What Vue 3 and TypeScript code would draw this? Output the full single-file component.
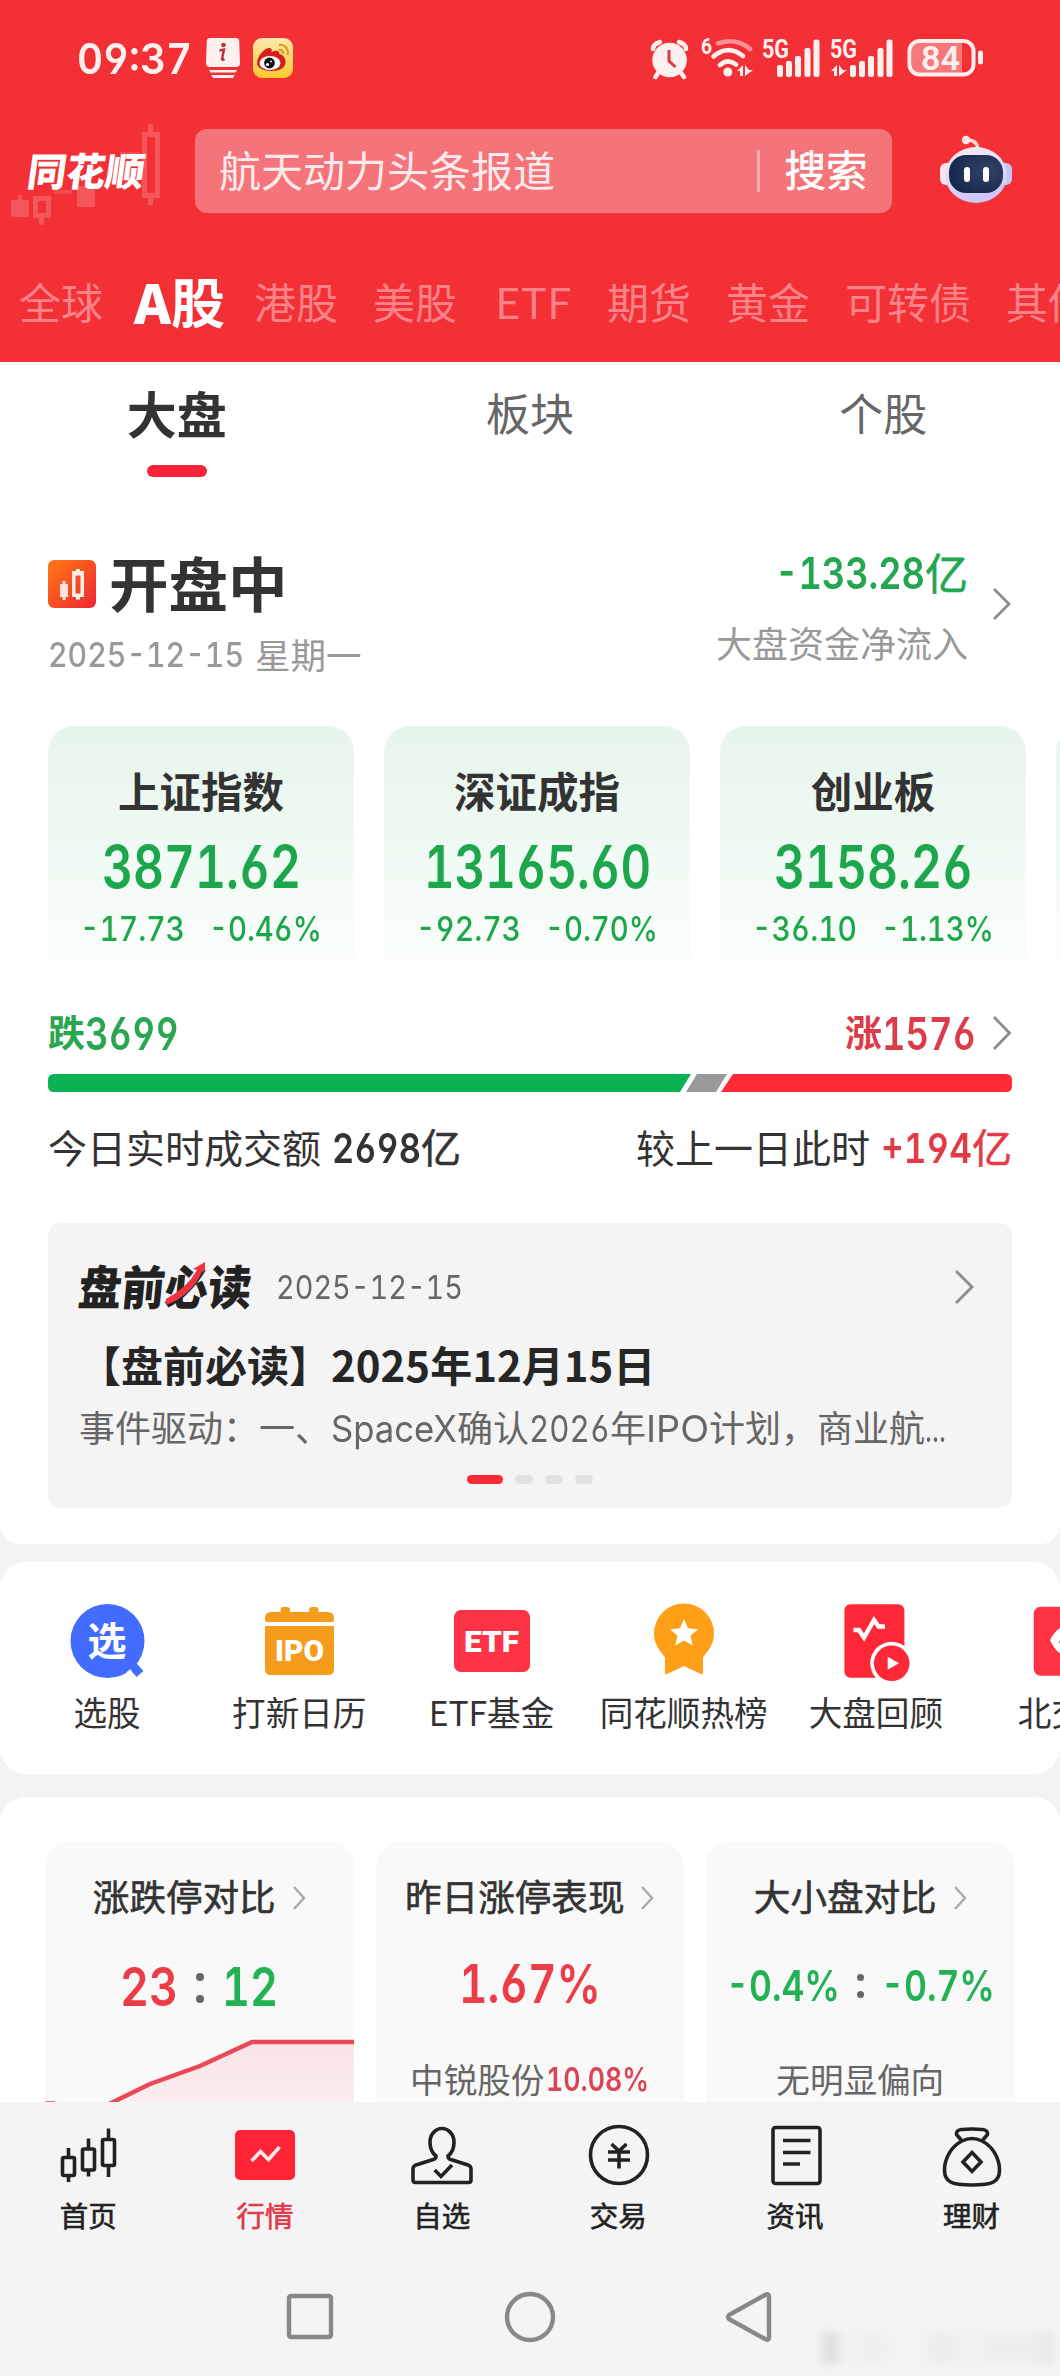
<script setup lang="ts">
interface IndexCard { name: string; value: string; width: number; diff: string; pct: string }
interface Fit { value: number }

// Condenses a run of Latin text to the given width in pixels.
const vFit = {
  mounted(el: HTMLElement, binding: Fit) {
    const natural = el.getBoundingClientRect().width
    if (!natural) return
    el.style.transformOrigin = 'left center'
    el.style.transform = `scaleX(${binding.value / natural})`
    el.style.marginRight = `${binding.value - natural}px`
  },
}

const subTabs: string[] = ['大盘', '板块', '个股']

const indices: IndexCard[] = [
  { name: '上证指数', value: '3871.62', width: 199, diff: '-17.73', pct: '-0.46%' },
  { name: '深证成指', value: '13165.60', width: 227, diff: '-92.73', pct: '-0.70%' },
  { name: '创业板', value: '3158.26', width: 199, diff: '-36.10', pct: '-1.13%' },
]

const shortcuts: string[] = ['选股', '打新日历', 'ETF基金', '同花顺热榜', '大盘回顾', '北交所']
const navItems: string[] = ['首页', '行情', '自选', '交易', '资讯', '理财']
</script>

<template>
  <div class="app">
    <header class="top">
      <div class="status">
        <span v-fit="115" class="n clock">09:37</span>
        <svg class="st-info" width="34" height="40" viewBox="0 0 34 40">
          <path d="M4 0h26q3 0 3.200 3l.8 22q0 4-4 4H4q-4 0-4-4L.8 3Q1 0 4 0z" fill="#fff0f0" />
          <path d="M3 32h28l-1.500 2.600H4.500zM5.500 37h23l-1.500 3h-20z" fill="#fff0f0" />
          <circle cx="17.500" cy="7" r="2.300" fill="#b8323c" />
          <path d="M13.500 12.500l4.500-1-2 9.500q0 1.500 2.500 0" fill="none" stroke="#b8323c" stroke-width="2.400" />
        </svg>
        <svg class="st-weibo" width="40" height="40" viewBox="0 0 40 40">
          <defs>
            <linearGradient id="wb" x1="0" y1="0" x2="0" y2="1">
              <stop offset="0" stop-color="#fde9b0" /><stop offset="1" stop-color="#fbc92c" />
            </linearGradient>
          </defs>
          <rect width="40" height="40" rx="9" fill="url(#wb)" />
          <path d="M4 25c0-6 7-15 12-15 3 0 3 2 2.500 4 4-2 8-2 8 2 4 1 6 4 6 8 0 6-6 9-14 9S4 30 4 25z" fill="#d51f1c" />
          <ellipse cx="17" cy="25" rx="10.500" ry="7" fill="#fff" />
          <circle cx="16.500" cy="25" r="5.400" fill="#111" />
          <circle cx="14.500" cy="26.500" r="1.600" fill="#fff" /><circle cx="18" cy="23.500" r=".9" fill="#fff" />
          <path d="M26 7c6-1 10 4 8.500 10M26 12c3-.5 5 1.500 4 4" fill="none" stroke="#d6a62a" stroke-width="2.400" />
        </svg>
        <svg class="st-right" width="340" height="44" viewBox="0 0 340 44">
          <g fill="none" stroke="#fff0f0" stroke-linecap="round">
            <path d="M5 13q0-5 7-7M31 6q7 2 7 7" stroke-width="4.500" />
            <path d="M10 37l-2.500 4M33 37l3 4" stroke-width="4.500" />
          </g>
          <circle cx="21.600" cy="24" r="17.300" fill="#fff0f0" />
          <path d="M21 14v11l6.500 6" fill="none" stroke="#d93a44" stroke-width="3" />
          <text x="53" y="18" font-size="22" class="st-t" textLength="11" lengthAdjust="spacingAndGlyphs">6</text>
          <g fill="none" stroke="#fff0f0" stroke-width="4.600" stroke-linecap="round">
            <path d="M70 7.500Q88 1 102 13" stroke="#fb8f93" />
            <path d="M65.500 20.500Q80 8 95 20" />
            <path d="M72 29Q80 22 88 28.500" />
          </g>
          <circle cx="79.800" cy="36" r="4.500" fill="#fff0f0" />
          <path d="M89 35l6-6v11h-3v-5zM97 29v11l8-6h-4z" fill="#fff0f0" />
          <text x="114" y="21.500" font-size="25.500" class="st-t" textLength="27" lengthAdjust="spacingAndGlyphs">5G</text>
          <text x="182" y="21.500" font-size="25.500" class="st-t" textLength="27" lengthAdjust="spacingAndGlyphs">5G</text>
          <path d="M183 35l6-6v11h-3v-5zM191 29v11l8-6h-4z" fill="#fff0f0" />
          <g fill="#fff0f0">
            <rect x="129" y="29" width="6" height="12" rx="2" /><rect x="138" y="25" width="6" height="16" rx="2" />
            <rect x="147" y="20" width="6" height="21" rx="2" /><rect x="156.500" y="12" width="6" height="29" rx="2" />
            <rect x="165.500" y="3.500" width="6" height="37.500" rx="2" />
            <rect x="202" y="29" width="6" height="12" rx="2" /><rect x="211" y="25" width="6" height="16" rx="2" />
            <rect x="220" y="20" width="6" height="21" rx="2" /><rect x="229.500" y="12" width="6" height="29" rx="2" />
            <rect x="238.500" y="3.500" width="6" height="37.500" rx="2" />
            <rect x="330" y="14.500" width="5" height="14" rx="2.500" />
          </g>
          <path d="M270 6h44v31h-44q-6 0-6-6V12q0-6 6-6z" fill="#f8777b" />
          <rect x="261.500" y="5" width="64" height="33.500" rx="10" fill="none" stroke="#fff0f0" stroke-width="4" />
          <text x="273" y="34" font-size="34" class="st-t st-batt" textLength="39" lengthAdjust="spacingAndGlyphs">84</text>
        </svg>
      </div>

      <div class="search-row">
        <div class="brand">
          <svg class="brand-bg" width="170" height="110" viewBox="0 0 170 110">
            <g fill="#f5565b">
              <path d="M11 84h7v-5h4v5h7v17H11zM77 70h18v21H77z" />
              <path fill-rule="evenodd" d="M33 80h18v22h-7v7h-5v-7h-6zM38 85v12h8V85z" />
              <path d="M54 74h18v4H54zM120 36h20v5h-20z" opacity=".7" />
              <path fill-rule="evenodd" d="M142 16h6V8h5v8h7v66h-7v7h-5v-7h-6zM147 21v56h8V21z" />
            </g>
          </svg>
          <span class="brand-name">同花顺</span>
        </div>
        <div class="search">
          <span class="c query">航天动力头条报道</span>
          <i class="sep"></i>
          <span class="c go semi">搜索</span>
        </div>
        <svg class="robot" width="80" height="76" viewBox="0 0 80 76">
          <defs>
            <linearGradient id="rb" x1="0" y1="0" x2=".3" y2="1">
              <stop offset="0" stop-color="#ffe9ee" /><stop offset=".5" stop-color="#dfe0fb" /><stop offset="1" stop-color="#cdc6f6" />
            </linearGradient>
            <radialGradient id="rf" cx=".7" cy=".4" r=".8"><stop offset="0" stop-color="#344166" /><stop offset="1" stop-color="#13254a" /></radialGradient>
          </defs>
          <path d="M30 7q11-1 12 9" fill="none" stroke="#ffd5dc" stroke-width="3.500" />
          <circle cx="30" cy="7" r="4.200" fill="#ffe3e6" />
          <rect x="4" y="30" width="14" height="22" rx="6" fill="#fbe3ee" /><rect x="62" y="30" width="14" height="22" rx="6" fill="#c5c4f5" />
          <ellipse cx="40" cy="42" rx="31" ry="28" fill="url(#rb)" />
          <rect x="13" y="22" width="54" height="38" rx="17" fill="url(#rf)" />
          <rect x="28" y="34" width="6" height="15" rx="3" fill="#fff" /><rect x="47" y="34" width="6" height="15" rx="3" fill="#fff" />
        </svg>
      </div>

      <nav class="markets">
        <span class="c m">全球</span>
        <span class="c m on"><b v-fit="37">A</b>股</span>
        <span class="c m">港股</span>
        <span class="c m">美股</span>
        <span class="c m etf"><span v-fit="76">ETF</span></span>
        <span class="c m">期货</span>
        <span class="c m">黄金</span>
        <span class="c m">可转债</span>
        <span class="c m">其他</span>
      </nav>
    </header>

    <main class="overview">
      <div class="subtabs">
        <div v-for="(t, i) in subTabs" :key="t" class="subtab" :class="{ on: i === 0 }">
          <span class="c">{{ t }}</span>
          <i></i>
        </div>
      </div>

      <div class="session">
        <div class="state">
          <div class="state-row">
            <svg width="48" height="48" viewBox="0 0 48 48">
              <defs><linearGradient id="or" x1="0" y1="0" x2="1" y2="1"><stop offset="0" stop-color="#ff7a12" /><stop offset="1" stop-color="#ee2636" /></linearGradient></defs>
              <rect width="48" height="48" rx="6" fill="url(#or)" />
              <path d="M12 24h2.500v-3h3v3H20v13h-2.500v3h-3v-3H12z" fill="#ffe2d8" />
              <path fill-rule="evenodd" d="M24 11h4V9h4v2h4v26h-4v2.500h-4V37h-4zM27.500 15.500v18h5v-18z" fill="#fff1e6" />
            </svg>
            <span class="c state-name">开盘中</span>
          </div>
          <div class="date-row"><span v-fit="196" class="n">2025-12-15</span><span class="c">星期一</span></div>
        </div>
        <div class="flow">
          <div class="flow-val"><span v-fit="150" class="n">-133.28</span><span class="c semi">亿</span></div>
          <div class="flow-lab"><span class="c">大盘资金净流入</span></div>
        </div>
        <svg class="chev big" width="20" height="34" viewBox="0 0 20 34"><path d="M2 2l15 15L2 32" /></svg>
      </div>

      <div class="indices">
        <div v-for="c in indices" :key="c.name" class="index">
          <div class="ix-name"><span class="c">{{ c.name }}</span></div>
          <div class="ix-val"><span v-fit="c.width" class="n">{{ c.value }}</span></div>
          <div class="ix-sub"><span v-fit="105" class="n">{{ c.diff }}</span><span v-fit="113" class="n">{{ c.pct }}</span></div>
        </div>
        <div class="index"></div>
      </div>

      <div class="breadth">
        <div class="down"><span class="c">跌</span><span v-fit="94" class="n">3699</span></div>
        <div class="up"><span class="c">涨</span><span v-fit="94" class="n">1576</span>
          <svg class="chev" width="20" height="36" viewBox="0 0 20 36"><path d="M2 2l15.500 16L2 34" /></svg>
        </div>
      </div>
      <svg class="ratio" width="964" height="18" viewBox="0 0 964 18">
        <path d="M6 0h637l-11 18H6q-6 0-6-6V6q0-6 6-6z" fill="#0bb253" />
        <path d="M649 0h30l-11 18h-30z" fill="#999" />
        <path d="M685 0h273q6 0 6 6v6q0 6-6 6H673z" fill="#ff2a35" />
      </svg>

      <div class="turnover">
        <div class="pair"><span class="c">今日实时成交额</span><b v-fit="89" class="n">2698</b><b class="c semi">亿</b></div>
        <div class="pair right"><span class="c">较上一日此时</span><b v-fit="91" class="n">+194</b><b class="c semi">亿</b></div>
      </div>

      <section class="news">
        <div class="news-head">
          <div class="news-logo">
            <span>盘前必读</span>
            <svg width="42" height="46" viewBox="0 0 42 46"><path d="M0 44v-6Q21 27 31 9l-4-1L39 1v9l-3 1Q25 35 0 44z" fill="#ee3340" /></svg>
          </div>
          <span v-fit="187" class="n news-date">2025-12-15</span>
          <svg class="chev" width="20" height="36" viewBox="0 0 20 36"><path d="M2 2l16 16L2 34" /></svg>
        </div>
        <div class="news-title"><span class="c">【盘前必读】<span>2025年12月15日</span></span></div>
        <div class="news-body"><span class="c">事件驱动：一、</span><span v-fit="126" class="n body-n">SpaceX</span><span class="c">确认</span><span v-fit="81" class="n body-n">2026</span><span class="c">年</span><span v-fit="63" class="n body-n">IPO</span><span class="c">计划，商业航</span><span v-fit="21" class="n body-n">...</span></div>
        <div class="dots"><i class="on"></i><i></i><i></i><i></i></div>
      </section>
    </main>

    <section class="shortcuts">
      <div v-for="(s, i) in shortcuts" :key="s" class="sc">
        <svg width="80" height="80" viewBox="0 0 80 80">
          <g v-if="i === 0">
            <path d="M65 63l8 9" stroke="#416cff" stroke-width="9" />
            <circle cx="40.500" cy="39" r="37" fill="#416cff" />
            <path d="M64 68l-4 3" stroke="#fff" stroke-width="2" />
            <text x="40" y="53" font-size="39" text-anchor="middle" class="ico-cn">选</text>
          </g>
          <g v-else-if="i === 1" fill="#f59c1c">
            <rect x="21.500" y="5" width="9.500" height="10" rx="3" /><rect x="50" y="5" width="9.500" height="10" rx="3" />
            <path d="M12 10h57q6 0 6 6v2q0 2-2 2H8q-2 0-2-2v-2q0-6 6-6zM7 24h67q1 0 1 1v42q0 6-6 6H12q-6 0-6-6V25q0-1 1-1z" />
            <text x="16" y="59" font-size="29.500" class="ico-t" textLength="49" lengthAdjust="spacingAndGlyphs">IPO</text>
          </g>
          <g v-else-if="i === 2">
            <rect x="3" y="8" width="76" height="62" rx="7" fill="#ff3345" />
            <text x="13" y="49.500" font-size="29.500" class="ico-t" textLength="55" lengthAdjust="spacingAndGlyphs">ETF</text>
          </g>
          <g v-else-if="i === 3">
            <path d="M21 50h38v21q0 2-2 1L40 64l-17 8q-2 1-2-1z" fill="#ff9f18" />
            <path d="M40 1.500a30 30 0 0 1 30 30c0 12-7 18-11 24H21c-4-6-11-12-11-24a30 30 0 0 1 30-30z" fill="#ff9f18" />
            <path d="M40 17l4 9.200 10 1-7.500 6.600 2.200 9.800L40 38.500l-8.700 5.100 2.200-9.800L26 27.200l10-1z" fill="#fff" />
          </g>
          <g v-else-if="i === 4">
            <rect x="8.400" y="2.300" width="60" height="73.500" rx="6" fill="#ff2738" />
            <path d="M17.500 28h5.500l5 7.500L38 18l4.500 6.500H49" fill="none" stroke="#fff" stroke-width="4.400" />
            <circle cx="55.700" cy="61.300" r="21.500" fill="#fff" /><circle cx="55.700" cy="61.300" r="17.800" fill="#ff2738" />
            <path d="M51.700 54.800v13l11.300-6.500z" fill="#fff" />
          </g>
          <g v-else>
            <rect x="5.700" y="4.700" width="72" height="69" rx="7" fill="#ff3345" />
            <path d="M22 38q8-15 20-15v10q-8 0-11 7 3 6 11 7v10q-14-5-20-19z" fill="#fff" />
          </g>
        </svg>
        <span class="c">{{ s }}</span>
      </div>
    </section>

    <section class="stats">
      <div class="stat">
        <div class="s-title"><span class="c semi">涨跌停对比</span><svg class="chev sm" width="14" height="26" viewBox="0 0 14 26"><path d="M2 2l10 11L2 24" /></svg></div>
        <div class="s-val v1"><b v-fit="58" class="n red">23</b><i class="colon"></i><b v-fit="56" class="n green">12</b></div>
        <svg class="trend" width="309" height="64" viewBox="0 0 309 64">
          <defs><linearGradient id="tr" x1="0" y1="0" x2="0" y2="1"><stop offset="0" stop-color="#f9e3e6" /><stop offset="1" stop-color="#fbedef" /></linearGradient></defs>
          <path d="M67 64L105 46l50-18L207 4h102v60z" fill="url(#tr)" />
          <path d="M0 65.500h10M64 66l41-20 50-18L207 4h102" fill="none" stroke="#e94856" stroke-width="4.500" />
        </svg>
      </div>
      <div class="stat">
        <div class="s-title"><span class="c semi">昨日涨停表现</span><svg class="chev sm" width="14" height="26" viewBox="0 0 14 26"><path d="M2 2l10 11L2 24" /></svg></div>
        <div class="s-val v2"><b v-fit="142" class="n red">1.67%</b></div>
        <div class="s-sub"><span class="c">中锐股份</span><b v-fit="103" class="n">10.08%</b></div>
      </div>
      <div class="stat">
        <div class="s-title"><span class="c semi">大小盘对比</span><svg class="chev sm" width="14" height="26" viewBox="0 0 14 26"><path d="M2 2l10 11L2 24" /></svg></div>
        <div class="s-val v3"><b v-fit="114" class="n green">-0.4%</b><i class="colon"></i><b v-fit="114" class="n green">-0.7%</b></div>
        <div class="s-sub"><span class="c">无明显偏向</span></div>
      </div>
    </section>

    <footer class="bottom">
      <div class="nav">
        <div v-for="(t, i) in navItems" :key="t" class="nav-item" :class="{ on: i === 1 }">
          <svg width="64" height="64" viewBox="0 0 64 64" fill="none" stroke="#222" stroke-width="3.600">
            <g v-if="i === 0">
              <rect x="6.500" y="33.500" width="12" height="18" rx="1.500" /><path d="M12.500 24v9.500M12.500 51.500V58" />
              <rect x="26.500" y="25" width="12" height="21" rx="1.500" /><path d="M32.500 14.500V25M32.500 46v6.500" />
              <rect x="46.500" y="15.500" width="12" height="26" rx="1.500" /><path d="M52.500 4.500v11M52.500 41.500V53" />
            </g>
            <g v-else-if="i === 1">
              <rect x="2" y="6" width="60" height="50" rx="5" fill="#ff2436" stroke="none" />
              <path d="M18.500 37l9-9.500 8 8L46.500 23" stroke="#ffe9ec" />
            </g>
            <g v-else-if="i === 2">
              <path d="M26 32c-4-3-6-8-6-14a12 13.500 0 0 1 24 0c0 6-2 11-6 14q0 2.500 2 3.200L58 41q3 1 3 4v11q0 2.500-2.500 2.500h-53Q3 58.500 3 56V45q0-3 3-4l18-5.800q2-.7 2-3.200z" />
              <path d="M24.700 46l6.300 6.500L42 41" />
            </g>
            <g v-else-if="i === 3">
              <circle cx="33" cy="31" r="28.500" /><path d="M25.500 20l7.500 7 7.500-7M33 27v17.500M22 28h22M22 36h22" />
            </g>
            <g v-else-if="i === 4">
              <rect x="10" y="3.500" width="47" height="56" rx="2.500" /><path d="M20 16.500h27.500M20 28.500h27.500M20 40h17" />
            </g>
            <g v-else>
              <path d="M22 17l-5.500-6.500q-.5-4.500 5-5Q32 4.500 42.500 5.500q5.500.500 5 5L42 17" />
              <path d="M22 17C10 23 4.500 36 4.500 46c0 12 7 15 27.500 15s27.500-3 27.500-15C59.500 36 54 23 42 17q-5-2.500-10-2.500T22 17z" />
              <path d="M32 28.500l9 9.500-9 9.500-9-9.500z" />
            </g>
          </svg>
          <span class="c semi">{{ t }}</span>
        </div>
      </div>
      <div class="sys">
        <svg width="60" height="60" viewBox="0 0 60 60"><rect x="9" y="9" width="42" height="41" rx="2" /></svg>
        <svg width="60" height="60" viewBox="0 0 60 60"><circle cx="30" cy="30" r="23" /></svg>
        <svg width="60" height="60" viewBox="0 0 60 60"><path d="M9 28L46 7.500q3-1 3 2v41q0 3-3 2L9 32q-2-2 0-4z" /></svg>
      </div>
      <div class="smudge"></div>
    </footer>
  </div>
</template>

<style>
html, body { margin: 0; background: #f3f3f3; }
</style>

<style scoped>
.app {
  width: 1060px; height: 2376px; overflow: hidden; position: relative; background: #f3f3f4;
  display: flex; flex-direction: column; color: #333; white-space: nowrap;
  font-family: "Noto Sans CJK SC", "Noto Sans", sans-serif;
}
.app * { box-sizing: border-box; flex-shrink: 0; }
.app svg { display: block; }
.c { display: block; line-height: 1; margin-bottom: .09em; }
.semi { font-weight: 400; -webkit-text-stroke: .6px currentColor; }
.n { display: block; line-height: 1; font-family: Inter, Roboto, sans-serif; font-feature-settings: "cv03", "cv04", "tnum"; font-weight: 600; }
.chev { fill: none; stroke: #8c8c8c; stroke-width: 2.8px; }

.top { height: 362px; background: #f23036; color: #fff; }
.status { height: 116px; display: flex; align-items: center; padding-left: 77px; }
.clock { font-size: 43px; color: #fff0f0; }
.st-info { margin-left: 14px; }
.st-weibo { margin-left: 13px; }
.st-right { margin-left: 355px; }
.st-t { font-family: Roboto, sans-serif; font-weight: 700; fill: #fff0f0; }
.st-batt { font-weight: 600; }
.search-row { height: 110px; display: flex; align-items: center; }
.brand { width: 195px; height: 110px; position: relative; display: flex; align-items: center; padding-left: 28px; }
.brand-bg { position: absolute; left: 0; top: 0; }
.brand-name { position: relative; font-size: 39px; line-height: 1; font-weight: 900; transform: skewX(-8deg); margin-bottom: 4px; }
.search { width: 697px; height: 84px; border-radius: 12px; background: #f57479; display: flex; align-items: center; padding-left: 24px; }
.query { width: 538px; font-size: 42px; color: #ffeaeb; }
.sep { width: 2.500px; height: 42px; background: #fab0b3; margin-right: 25px; }
.go { font-size: 41.500px; }
.robot { margin-left: 44px; }
.markets { height: 136px; display: flex; align-items: center; padding: 18px 0 0 19px; gap: 35px; }
.m { font-size: 42px; color: #fb8387; }
.m.on { font-size: 54px; font-weight: 700; color: #fff; display: flex; width: 92px; margin-left: -4px; margin-right: -7px; }
.etf { width: 80px; display: flex; justify-content: center; padding-left: 2px; }

.overview { height: 1182px; background: #fff; border-radius: 0 0 20px 20px; overflow: hidden; }
.subtabs { display: flex; height: 115px; }
.subtab { width: 353.333px; display: flex; flex-direction: column; align-items: center; font-size: 44px; color: #666; }
.subtab span { height: 103px; line-height: 103px; margin: 0; position: relative; top: -1px; }
.subtab.on { font-size: 50px; font-weight: 700; color: #333; }
.subtab.on i { width: 60px; height: 12px; border-radius: 6px; background: #fb2339; }
.session { display: flex; padding: 77px 48px 0; height: 249px; }
.state { flex: 1; }
.state-row { height: 60px; display: flex; align-items: center; gap: 13px; }
.state-name { font-size: 59.500px; font-weight: 700; }
.date-row { margin-top: 23px; height: 36px; display: flex; align-items: center; font-size: 35.500px; color: #999; gap: 11px; }
.date-row .n { font-size: 34px; font-weight: 500; }
.flow { margin-top: -3px; display: flex; flex-direction: column; align-items: flex-end; }
.flow-val { height: 44px; display: flex; align-items: center; color: #22a650; font-size: 43px; }
.flow-val .n { font-size: 44px; }
.flow-lab { margin-top: 31px; height: 36px; display: flex; align-items: center; font-size: 36px; color: #999; }
.big { margin: 33px 0 0 24px; }
.indices { display: flex; gap: 30px; padding-left: 48px; }
.index { width: 306px; height: 268px; border-radius: 26px; padding-top: 46px; background: linear-gradient(#e6f5ec, #f1faf4 50%, #fefffe); color: #1da74c; }
.index > div { display: flex; justify-content: center; align-items: center; }
.ix-name { height: 42px; font-size: 41.500px; font-weight: 700; color: #333; }
.ix-val { height: 60px; margin-top: 22px; font-size: 59px; }
.ix-sub { height: 40px; margin-top: 13px; font-size: 34.500px; gap: 24px; }
.ix-sub .n { font-weight: 550; }
.breadth { display: flex; justify-content: space-between; height: 40px; margin: 19px 48px 0; font-size: 37px; font-weight: 700; }
.breadth > div { display: flex; align-items: center; }
.breadth .n { font-size: 45px; }
.down { color: #2aa651; }
.up { color: #dc3c4a; }
.up .chev { margin-left: 16px; }
.ratio { margin: 21px 0 0 48px; }
.turnover { height: 40px; margin: 36px 48px 0; display: flex; justify-content: space-between; }
.pair { display: flex; align-items: center; font-size: 40px; }
.pair span { margin-right: 11px; font-size: 39px; }
.pair .n { font-size: 41px; font-weight: 600; }
.right b { color: #e13b48; }
.news { margin: 55px 48px 0; height: 285px; border-radius: 12px; background: #f4f4f4; padding: 42px 31px 0; }
.news-head { height: 44px; display: flex; align-items: center; }
.news-logo { position: relative; width: 198px; }
.news-logo span { display: block; font-size: 47px; line-height: 1; font-weight: 900; color: #222; margin-bottom: 5px; transform: scaleX(.92) skewX(-6deg); transform-origin: left center; }
.news-logo svg { position: absolute; left: 87px; top: 0; }
.news-date { font-size: 33px; font-weight: 400; color: #666; margin-left: -1px; }
.news-head .chev { margin-left: auto; margin-right: 7px; }
.news-title { margin-top: 36px; height: 42px; display: flex; align-items: center; font-size: 42px; font-weight: 700; color: #262626; }
.news-body { margin-top: 23px; height: 36px; display: flex; align-items: center; font-size: 36px; color: #666; }
.body-n { font-weight: 400; font-size: 37px; }
.dots { margin-top: 29px; display: flex; gap: 12px; justify-content: center; }
.dots i { width: 18px; height: 9px; border-radius: 5px; background: #e2e2e2; }
.dots .on { width: 36px; background: #f92a38; }

.shortcuts { margin-top: 18px; height: 212px; background: #fff; border-radius: 26px; display: flex; padding: 40px 0 0 11px; overflow: hidden; }
.sc { width: 192.200px; display: flex; flex-direction: column; align-items: center; font-size: 33.600px; color: #333; }
.sc .c { margin-top: 13px; }
.ico-cn { font-weight: 700; fill: #fff; }
.ico-t { font-family: Roboto, sans-serif; font-weight: 900; fill: #fff; }

.stats { margin-top: 23px; height: 305px; background: #fff; border-radius: 26px 26px 0 0; padding: 45px 0 0 45px; display: flex; gap: 22px; overflow: hidden; }
.stat { width: 308.500px; height: 280px; background: #f9f9f9; border-radius: 24px; padding-top: 38px; overflow: hidden; }
.s-title { height: 36px; display: flex; justify-content: center; align-items: center; font-size: 36.600px; gap: 16px; }
.sm { stroke: #aaa; stroke-width: 2.400px; }
.s-val { height: 48px; margin-top: 46px; display: flex; justify-content: center; align-items: center; }
.v1 { font-size: 53px; padding-top: 3px; }
.v2 { font-size: 54px; padding-bottom: 4px; }
.v3 { font-size: 43px; padding-bottom: 1px; }
.red { color: #eb3c48; }
.green { color: #22b153; }
.colon { width: 8px; height: 30px; margin: 0 18px; display: flex; flex-direction: column; justify-content: space-between; }
.v3 .colon { width: 7px; height: 24px; margin: 0 17px; }
.colon::before, .colon::after { content: ""; width: 100%; aspect-ratio: 1; border-radius: 50%; background: #666; }
.trend { margin-top: 28px; }
.s-sub { height: 34px; margin-top: 53px; display: flex; justify-content: center; align-items: center; font-size: 33.600px; color: #666; gap: 2px; }
.s-sub .n { color: #d94552; font-size: 32px; font-weight: 600; }

.bottom { height: 274px; background: #f4f4f4; position: relative; }
.nav { display: flex; padding-top: 22px; }
.nav-item { width: 176.666px; display: flex; flex-direction: column; align-items: center; font-size: 28.500px; color: #222; }
.nav-item .c { margin-top: 13px; }
.nav-item.on { color: #e03a48; }
.sys { margin-top: 55px; padding: 0 280px; display: flex; justify-content: space-between; }
.sys svg { fill: none; stroke: #888; stroke-width: 4.400px; stroke-linejoin: round; }
.smudge { position: absolute; left: 822px; top: 230px; width: 230px; height: 32px; filter: blur(4px);
  background: linear-gradient(90deg, #dfdfdf 0 12px, #f2f2f2 22px 34px, #efefef 44px 60px, #f3f3f3 70px 100px, #ececec 112px 124px, #f1f1f1 134px 160px, #eee 170px 212px, #e6e6e6); }
</style>
